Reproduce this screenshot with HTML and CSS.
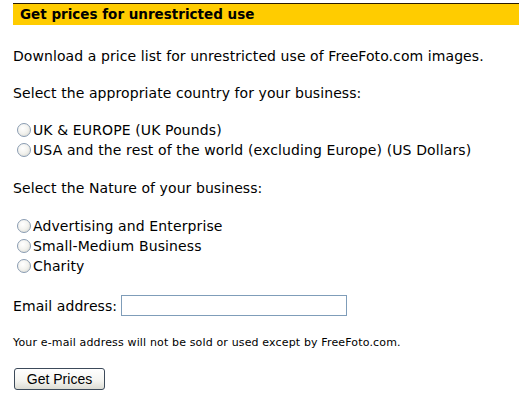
FILE: index.html
```html
<!DOCTYPE html>
<html>
<head>
<meta charset="utf-8">
<link rel="stylesheet" href="styles.css">
</head>
<body>
<div class="page">
  <h2 class="bar">Get prices for unrestricted use</h2>
  <p class="txt p1">Download a price list for unrestricted use of FreeFoto.com images.</p>
  <p class="txt p2">Select the appropriate country for your business:</p>
  <div class="group g1">
    <label class="opt"><span class="radio"></span>UK &amp; EUROPE (UK Pounds)</label>
    <label class="opt"><span class="radio"></span>USA and the rest of the world (excluding Europe) (US Dollars)</label>
  </div>
  <p class="txt p3">Select the Nature of your business:</p>
  <div class="group g2">
    <label class="opt"><span class="radio"></span>Advertising and Enterprise</label>
    <label class="opt"><span class="radio"></span>Small-Medium Business</label>
    <label class="opt"><span class="radio"></span>Charity</label>
  </div>
  <div class="email">
    <span class="txt">Email address:</span>
    <span class="input"></span>
  </div>
  <p class="small">Your e-mail address will not be sold or used except by FreeFoto.com.</p>
  <div class="btnrow"><span class="btn">Get Prices</span></div>
</div>
</body>
</html>
```
FILE: styles.css
```css
html, body {
  margin: 0;
  padding: 0;
  background: #ffffff;
}
.page {
  padding: 3px 0 0 13px;
  font-family: "DejaVu Sans", Verdana, sans-serif;
  color: #000;
}
.bar {
  margin: 0;
  height: 22px;
  box-sizing: border-box;
  border-top: 1px solid #2a1a00;
  background: #ffcc00;
  font-size: 13.5px;
  font-weight: bold;
  line-height: 21px;
  padding-left: 7px;
}
.txt {
  font-size: 14px;
  line-height: 18px;
  letter-spacing: 0.08px;
  margin: 0;
}
.p1 { margin-top: 22px; }
.p2 { margin-top: 19px; }
.group {
  display: flex;
  flex-direction: column;
}
.g1 { margin-top: 18px; }
.g2 { margin-top: 19px; }
.p3 { margin-top: 19px; }
.opt {
  display: flex;
  align-items: center;
  height: 20px;
  font-size: 14px;
  letter-spacing: 0.12px;
}
.radio {
  width: 12px;
  height: 12px;
  border: 1px solid #8a9cb2;
  border-radius: 50%;
  background: radial-gradient(circle at 40% 35%, #ffffff 0%, #f2f2ee 50%, #d4d4cc 100%);
  margin: 0 2px 0 4px;
  flex: none;
}
.email {
  display: flex;
  align-items: center;
  gap: 4px;
  margin-top: 19px;
}
.input {
  width: 226px;
  height: 21px;
  box-sizing: border-box;
  border: 1px solid #7f9db9;
  background: #fff;
}
.small {
  font-size: 11px;
  letter-spacing: 0.15px;
  margin: 20px 0 0 0;
  line-height: 14px;
}
.btnrow {
  margin-top: 18px;
}
.btn {
  display: inline-flex;
  align-items: center;
  justify-content: center;
  width: 91px;
  height: 22px;
  box-sizing: border-box;
  margin-left: 1px;
  border: 1px solid #3c4a5a;
  border-radius: 3px;
  background: linear-gradient(#ffffff, #f4f4f0 60%, #dcdcd4);
  font-family: "Liberation Sans", Arial, sans-serif;
  font-size: 14px;
  color: #000;
}
```
